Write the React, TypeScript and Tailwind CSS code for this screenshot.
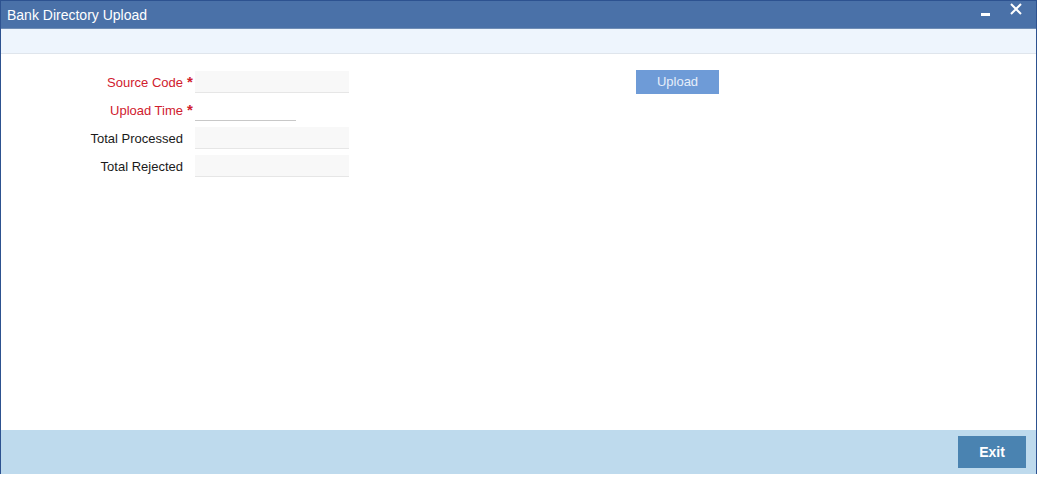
import React from "react";

function Row({ label, required, children }: { label: string; required?: boolean; children: React.ReactNode }) {
  return (
    <div className="flex h-[22px] items-center">
      <div className={`w-[182px] text-right text-[13px] leading-none ${required ? "text-[#d0202e]" : "text-[#1a1a1a]"}`}>
        {label}
      </div>
      <div className="w-[13px] self-start pl-[4px] pt-[3px] text-[15px] font-bold leading-none text-[#d0202e]">
        {required ? "*" : ""}
      </div>
      {children}
    </div>
  );
}

export default function App() {
  return (
    <div className="h-[483px] w-[1038px] bg-white" style={{ fontFamily: '"Liberation Sans", Arial, sans-serif' }}>
      <div className="flex h-[474px] w-[1037px] flex-col border-l border-r border-[#2d5290]">
        <div className="flex h-[29px] items-center justify-between border-t border-b border-[#2d5290] border-b-[#6f8db5] bg-[#4a71a8] pl-[6px] pr-[14px]">
          <span className="text-[14px] leading-none text-white">Bank Directory Upload</span>
          <div className="flex items-center gap-[20px]">
            <div className="-mt-[1px] h-[3px] w-[9px] bg-white" />
            <svg width="12" height="12" viewBox="0 0 12 12" className="-mt-[11px]">
              <path d="M1 1 L11 11 M11 1 L1 11" stroke="white" strokeWidth="2" />
            </svg>
          </div>
        </div>
        <div className="h-[25px] border-b border-[#dfe5ec] bg-[#eef5fd]" />
        <div className="relative flex flex-1 flex-col bg-white pt-[17px]">
          <div className="flex">
            <div className="flex flex-col gap-[6px]">
              <Row label="Source Code" required>
                <div className="-ml-[1px] h-[22px] w-[154px] border-b border-[#e6e6e6] bg-[#f8f8f8]" />
              </Row>
              <Row label="Upload Time" required>
                <div className="-ml-[1px] h-[22px] w-[101px] border-b border-[#c8c8c8] bg-white" />
              </Row>
              <Row label="Total Processed">
                <div className="-ml-[1px] h-[22px] w-[154px] border-b border-[#e6e6e6] bg-[#f8f8f8]" />
              </Row>
              <Row label="Total Rejected">
                <div className="-ml-[1px] h-[22px] w-[154px] border-b border-[#e6e6e6] bg-[#f8f8f8]" />
              </Row>
            </div>
            <div className="-mt-[2px] ml-[287px]">
              <button className="h-[24px] w-[83px] bg-[#6e9bd7] text-[13px] leading-none text-[#e6eefa]">
                Upload
              </button>
            </div>
          </div>
        </div>
        <div className="flex h-[44px] items-center justify-end bg-[#bedaed] pr-[10px]">
          <button className="h-[32px] w-[68px] bg-[#4a83b1] text-[14px] font-bold leading-none text-white">
            Exit
          </button>
        </div>
      </div>
    </div>
  );
}
